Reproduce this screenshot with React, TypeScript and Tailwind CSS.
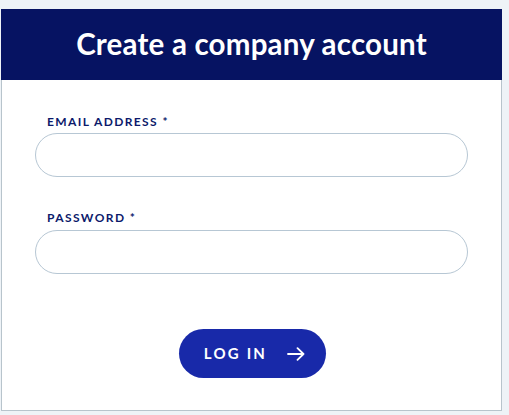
import React from "react";

export default function App() {
  return (
    <div className="w-[509px] h-[415px] bg-[#eef3f7] pt-[9px] pl-[1px]" style={{ fontFamily: "Lato, 'Open Sans', sans-serif" }}>
      <div className="w-[501px]">
        <div className="h-[71px] bg-[#061362] flex items-center justify-center">
          <h1 className="text-white text-[29.5px] font-bold tracking-[0.2px] leading-none pb-[2px]">Create a company account</h1>
        </div>
        <div className="h-[331px] bg-white border-x border-b border-[#b8c4cc] px-[33px] pt-[35px]">
          <label className="block pl-[12px] text-[12px] font-bold tracking-[1.4px] text-[#0c1a6b] leading-[14px]">EMAIL ADDRESS *</label>
          <input className="mt-[4px] block w-[433px] h-[44px] rounded-full border border-[#b7c7d4] outline-none px-5" />
          <label className="block mt-[34px] pl-[12px] text-[12px] font-bold tracking-[1.4px] text-[#0c1a6b] leading-[14px]">PASSWORD *</label>
          <input type="password" className="mt-[5px] block w-[433px] h-[44px] rounded-full border border-[#b7c7d4] outline-none px-5" />
          <div className="flex justify-center mt-[55px] pl-[1px]">
            <button className="h-[49px] w-[147px] rounded-full bg-[#1829a9] text-white flex items-center justify-center gap-[20px] pl-[5px]">
              <span className="text-[15px] font-bold tracking-[2.2px] leading-none">LOG IN</span>
              <svg width="18" height="14" viewBox="0 0 18 14" fill="none" stroke="white" strokeWidth="1.8" strokeLinecap="round" strokeLinejoin="round">
                <path d="M1 7h15.5M10.5 1.2 16.5 7l-6 5.8" />
              </svg>
            </button>
          </div>
        </div>
      </div>
    </div>
  );
}
